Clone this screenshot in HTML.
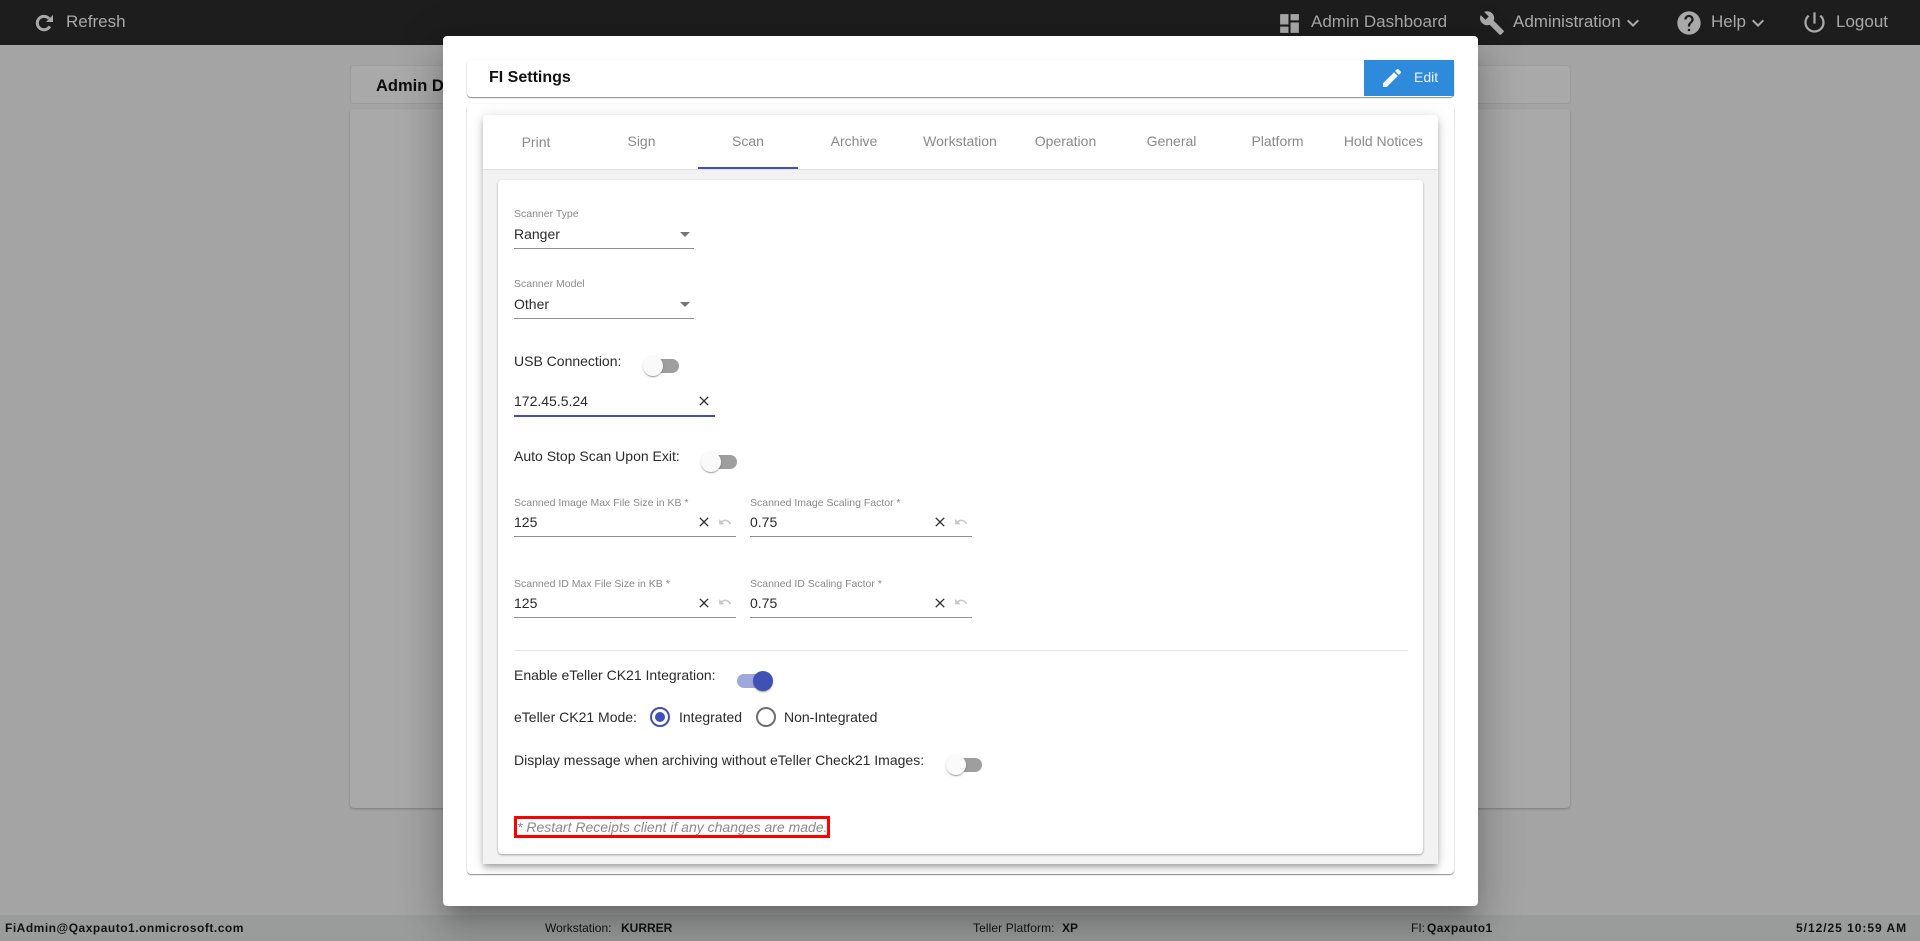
<!DOCTYPE html>
<html lang="en">
<head>
<meta charset="utf-8">
<title>FI Settings</title>
<style>
html,body{margin:0;padding:0;width:1920px;height:941px;overflow:hidden;background:#a4a4a4;font-family:"Liberation Sans",Arial,sans-serif;}
.a{position:absolute;white-space:nowrap;}
.t{position:absolute;white-space:nowrap;line-height:20px;height:20px;font-size:14px;color:#2b2b2b;}
.l{position:absolute;white-space:nowrap;line-height:14px;height:14px;font-size:10.5px;color:#8a8a8a;}
.tab{position:absolute;white-space:nowrap;line-height:20px;height:20px;font-size:14px;color:#8a8a8a;width:106px;text-align:center;}
.n{position:absolute;white-space:nowrap;line-height:24px;height:24px;font-size:17px;color:#a9a9a9;top:10px;}
.u{position:absolute;height:1px;background:#8f8f8f;}
svg{position:absolute;display:block;}
.f{position:absolute;top:920px;line-height:16px;font-size:12px;color:#111;white-space:nowrap;}
.f b{font-weight:700;}
.track{position:absolute;width:34px;height:14px;border-radius:7px;background:#9e9e9e;}
.knob{position:absolute;width:20px;height:20px;border-radius:50%;background:#fafafa;box-shadow:0 2px 1px -1px rgba(0,0,0,.2),0 1px 1px 0 rgba(0,0,0,.14),0 1px 3px 0 rgba(0,0,0,.12);}
</style>
</head>
<body>

<!-- background page -->
<div class="a" style="left:350px;top:65px;width:1219px;height:37px;background:#a9a9a9;border:1px solid #9b9b9b;border-radius:4px;"></div>
<div class="a" style="left:376px;top:76px;font-size:16.5px;font-weight:700;color:#0c0c0c;line-height:20px;">Admin Dashboard</div>
<div class="a" style="left:350px;top:109px;width:1220px;height:699px;background:#a9a9a9;border-radius:4px;box-shadow:0 1px 2px rgba(0,0,0,.25);"></div>

<!-- footer -->
<div class="a" style="left:0;top:915px;width:1920px;height:26px;background:#9a9b9b;"></div>
<div class="f" style="left:5px;letter-spacing:.5px;"><b>FiAdmin@Qaxpauto1.onmicrosoft.com</b></div>
<div class="f" style="left:545px;">Workstation:</div>
<div class="f" style="left:621px;"><b>KURRER</b></div>
<div class="f" style="left:973px;letter-spacing:.1px;">Teller Platform:</div>
<div class="f" style="left:1062px;"><b>XP</b></div>
<div class="f" style="left:1411px;">FI:</div>
<div class="f" style="left:1427px;letter-spacing:.4px;"><b>Qaxpauto1</b></div>
<div class="f" style="left:1796px;letter-spacing:.97px;"><b>5/12/25 10:59 AM</b></div>

<!-- header -->
<div class="a" style="left:0;top:0;width:1920px;height:45px;background:#1d1d1d;"></div>
<svg style="left:30px;top:10px" width="28" height="28" viewBox="30 10 28 28"><path d="M49.1 18.7A6.7 6.7 0 1 0 49.8 26.4" fill="none" stroke="#a9a9a9" stroke-width="3"/><path d="M53 15v7h-7z" fill="#a9a9a9"/></svg>
<div class="n" style="left:66px;">Refresh</div>

<svg style="left:1277px;top:11px" width="25" height="25" viewBox="0 0 24 24" fill="#a9a9a9"><path d="M3 13h8V3H3v10zm0 8h8v-6H3v6zm10 0h8V11h-8v10zm0-18v6h8V3h-8z"/></svg>
<div class="n" style="left:1311px;">Admin Dashboard</div>
<svg style="left:1478.5px;top:10px" width="26" height="26" viewBox="0 0 24 24" fill="#a9a9a9"><path d="M22.7 19l-9.1-9.1c.9-2.3.4-5-1.5-6.9-2-2-5-2.4-7.4-1.3L9 6 6 9 1.6 4.7C.4 7.1.9 10.1 2.9 12.1c1.9 1.9 4.6 2.4 6.9 1.5l9.1 9.1c.4.4 1 .4 1.4 0l2.3-2.3c.5-.4.5-1.1.1-1.4z"/></svg>
<div class="n" style="left:1513px;">Administration</div>
<svg style="left:1621px;top:10.5px" width="24" height="24" viewBox="0 0 24 24" fill="#a9a9a9"><path d="M7.41 8.59L12 13.17l4.59-4.58L18 10l-6 6-6-6 1.41-1.41z"/></svg>
<svg style="left:1675px;top:9px" width="28" height="28" viewBox="0 0 24 24" fill="#a9a9a9"><path d="M12 2C6.48 2 2 6.48 2 12s4.48 10 10 10 10-4.48 10-10S17.52 2 12 2zm1 17h-2v-2h2v2zm2.07-7.75l-.9.92C13.45 12.9 13 13.5 13 15h-2v-.5c0-1.1.45-2.1 1.17-2.83l1.24-1.26c.37-.36.59-.86.59-1.41 0-1.1-.9-2-2-2s-2 .9-2 2H8c0-2.21 1.79-4 4-4s4 1.79 4 4c0 .88-.36 1.68-.93 2.25z"/></svg>
<div class="n" style="left:1711px;">Help</div>
<svg style="left:1746px;top:10.5px" width="24" height="24" viewBox="0 0 24 24" fill="#a9a9a9"><path d="M7.41 8.59L12 13.17l4.59-4.58L18 10l-6 6-6-6 1.41-1.41z"/></svg>
<svg style="left:1801px;top:9px" width="27" height="27" viewBox="0 0 24 24" fill="#a9a9a9"><path d="M13 3h-2v10h2V3zm4.83 2.17l-1.42 1.42C17.99 7.86 19 9.81 19 12c0 3.87-3.13 7-7 7s-7-3.13-7-7c0-2.19 1.01-4.14 2.58-5.42L6.17 5.17C4.23 6.82 3 9.26 3 12c0 4.97 4.03 9 9 9s9-4.03 9-9c0-2.74-1.23-5.18-3.17-6.83z"/></svg>
<div class="n" style="left:1836px;">Logout</div>

<!-- modal -->
<div class="a" style="left:443px;top:36px;width:1035px;height:870px;background:#fff;border-radius:4px;box-shadow:0 11px 15px -7px rgba(0,0,0,.2),0 24px 38px 3px rgba(0,0,0,.14),0 9px 46px 8px rgba(0,0,0,.12);"></div>

<!-- title card -->
<div class="a" style="left:467px;top:60px;width:987px;height:37px;background:#fff;border-radius:4px;box-shadow:0 1px 1px rgba(0,0,0,.45),0 0 2px rgba(0,0,0,.06);"></div>
<div class="a" style="left:489px;top:68px;font-size:16px;font-weight:700;line-height:20px;color:#111;">FI Settings</div>
<div class="a" style="left:1364px;top:60px;width:90px;height:36px;background:#2e8bdc;"></div>
<svg style="left:1380px;top:66px" width="24" height="24" viewBox="0 0 24 24" fill="#f4f9fd"><path d="M3 17.25V21h3.75L17.81 9.94l-3.75-3.75L3 17.25zM20.71 7.04c.39-.39.39-1.02 0-1.41l-2.34-2.34c-.39-.39-1.02-.39-1.41 0l-1.83 1.83 3.75 3.75 1.83-1.83z"/></svg>
<div class="a" style="left:1414px;top:67px;font-size:14px;line-height:20px;color:#eaf3fb;">Edit</div>

<!-- outer card -->
<div class="a" style="left:467px;top:104px;width:987px;height:770px;background:#fff;border-radius:4px;box-shadow:0 1px 1px rgba(0,0,0,.45),0 0 2px rgba(0,0,0,.06);"></div>

<!-- tab panel -->
<div class="a" style="left:483px;top:115px;width:955px;height:749px;background:#f2f2f2;border-radius:4px 4px 0 0;box-shadow:0 3px 5px -1px rgba(0,0,0,.2),0 5px 8px 0 rgba(0,0,0,.14),0 1px 14px 0 rgba(0,0,0,.12);"></div>
<div class="a" style="left:483px;top:115px;width:955px;height:54px;background:#fff;border-radius:4px 4px 0 0;border-bottom:1px solid #e0e0e0;"></div>
<div class="tab" style="left:483px;top:132px;">Print</div>
<div class="tab" style="left:588.5px;top:131px;">Sign</div>
<div class="tab" style="left:695px;top:131px;">Scan</div>
<div class="tab" style="left:801px;top:131px;">Archive</div>
<div class="tab" style="left:907px;top:131px;">Workstation</div>
<div class="tab" style="left:1012.5px;top:131px;">Operation</div>
<div class="tab" style="left:1118.5px;top:131px;">General</div>
<div class="tab" style="left:1224.5px;top:131px;">Platform</div>
<div class="tab" style="left:1330.5px;top:131px;">Hold Notices</div>
<div class="a" style="left:698px;top:167px;width:100px;height:2px;background:#3f51b5;"></div>

<!-- inner card -->
<div class="a" style="left:498px;top:180px;width:925px;height:674px;background:#fff;border-radius:4px;box-shadow:0 1px 2px rgba(0,0,0,.35);"></div>

<!-- selects -->
<div class="l" style="left:514px;top:207px;">Scanner Type</div>
<div class="t" style="left:514px;top:224px;">Ranger</div>
<div class="a" style="left:680px;top:232px;width:0;height:0;border-left:5px solid transparent;border-right:5px solid transparent;border-top:5px solid #757575;"></div>
<div class="u" style="left:514px;top:248px;width:180px;"></div>

<div class="l" style="left:514px;top:277px;">Scanner Model</div>
<div class="t" style="left:514px;top:294px;">Other</div>
<div class="a" style="left:680px;top:302px;width:0;height:0;border-left:5px solid transparent;border-right:5px solid transparent;border-top:5px solid #757575;"></div>
<div class="u" style="left:514px;top:318px;width:180px;"></div>

<!-- USB -->
<div class="t" style="left:514px;top:351px;">USB Connection:</div>
<div class="track" style="left:645px;top:359px;"></div>
<div class="knob" style="left:643px;top:356px;"></div>
<div class="t" style="left:514px;top:391px;">172.45.5.24</div>
<svg style="left:696px;top:393px" width="16" height="16" viewBox="0 0 24 24" fill="#333"><path d="M19 6.41L17.59 5 12 10.59 6.41 5 5 6.41 10.59 12 5 17.59 6.41 19 12 13.41 17.59 19 19 17.59 13.41 12z"/></svg>
<div class="a" style="left:514px;top:415px;width:201px;height:2px;background:#3f51b5;"></div>

<!-- Auto stop -->
<div class="t" style="left:514px;top:446px;">Auto Stop Scan Upon Exit:</div>
<div class="track" style="left:703px;top:455px;"></div>
<div class="knob" style="left:701px;top:452px;"></div>

<!-- row 1 -->
<div class="l" style="left:514px;top:496px;">Scanned Image Max File Size in KB *</div>
<div class="t" style="left:514px;top:512px;">125</div>
<svg style="left:696px;top:514px" width="16" height="16" viewBox="0 0 24 24" fill="#333"><path d="M19 6.41L17.59 5 12 10.59 6.41 5 5 6.41 10.59 12 5 17.59 6.41 19 12 13.41 17.59 19 19 17.59 13.41 12z"/></svg>
<svg style="left:718px;top:515px" width="14" height="14" viewBox="0 0 24 24" fill="#c6c6c6"><path d="M12.5 8c-2.65 0-5.05.99-6.9 2.6L2 7v9h9l-3.62-3.62c1.39-1.16 3.16-1.88 5.12-1.88 3.54 0 6.55 2.31 7.6 5.5l2.37-.78C21.08 11.03 17.15 8 12.5 8z"/></svg>
<div class="u" style="left:514px;top:536px;width:222px;"></div>

<div class="l" style="left:750px;top:496px;">Scanned Image Scaling Factor *</div>
<div class="t" style="left:750px;top:512px;">0.75</div>
<svg style="left:932px;top:514px" width="16" height="16" viewBox="0 0 24 24" fill="#333"><path d="M19 6.41L17.59 5 12 10.59 6.41 5 5 6.41 10.59 12 5 17.59 6.41 19 12 13.41 17.59 19 19 17.59 13.41 12z"/></svg>
<svg style="left:954px;top:515px" width="14" height="14" viewBox="0 0 24 24" fill="#c6c6c6"><path d="M12.5 8c-2.65 0-5.05.99-6.9 2.6L2 7v9h9l-3.62-3.62c1.39-1.16 3.16-1.88 5.12-1.88 3.54 0 6.55 2.31 7.6 5.5l2.37-.78C21.08 11.03 17.15 8 12.5 8z"/></svg>
<div class="u" style="left:750px;top:536px;width:222px;"></div>

<!-- row 2 -->
<div class="l" style="left:514px;top:577px;">Scanned ID Max File Size in KB *</div>
<div class="t" style="left:514px;top:593px;">125</div>
<svg style="left:696px;top:595px" width="16" height="16" viewBox="0 0 24 24" fill="#333"><path d="M19 6.41L17.59 5 12 10.59 6.41 5 5 6.41 10.59 12 5 17.59 6.41 19 12 13.41 17.59 19 19 17.59 13.41 12z"/></svg>
<svg style="left:718px;top:595px" width="14" height="14" viewBox="0 0 24 24" fill="#c6c6c6"><path d="M12.5 8c-2.65 0-5.05.99-6.9 2.6L2 7v9h9l-3.62-3.62c1.39-1.16 3.16-1.88 5.12-1.88 3.54 0 6.55 2.31 7.6 5.5l2.37-.78C21.08 11.03 17.15 8 12.5 8z"/></svg>
<div class="u" style="left:514px;top:617px;width:222px;"></div>

<div class="l" style="left:750px;top:577px;">Scanned ID Scaling Factor *</div>
<div class="t" style="left:750px;top:593px;">0.75</div>
<svg style="left:932px;top:595px" width="16" height="16" viewBox="0 0 24 24" fill="#333"><path d="M19 6.41L17.59 5 12 10.59 6.41 5 5 6.41 10.59 12 5 17.59 6.41 19 12 13.41 17.59 19 19 17.59 13.41 12z"/></svg>
<svg style="left:954px;top:595px" width="14" height="14" viewBox="0 0 24 24" fill="#c6c6c6"><path d="M12.5 8c-2.65 0-5.05.99-6.9 2.6L2 7v9h9l-3.62-3.62c1.39-1.16 3.16-1.88 5.12-1.88 3.54 0 6.55 2.31 7.6 5.5l2.37-.78C21.08 11.03 17.15 8 12.5 8z"/></svg>
<div class="u" style="left:750px;top:617px;width:222px;"></div>

<!-- divider -->
<div class="a" style="left:514px;top:650px;width:894px;height:1px;background:#e3e3e3;"></div>

<!-- eTeller -->
<div class="t" style="left:514px;top:665px;">Enable eTeller CK21 Integration:</div>
<div class="track" style="left:737px;top:674px;background:#9fa8da;"></div>
<div class="knob" style="left:753px;top:671px;background:#3f51b5;"></div>

<div class="t" style="left:514px;top:707px;">eTeller CK21 Mode:</div>
<div class="a" style="left:650px;top:707px;width:16px;height:16px;border:2px solid #3f51b5;border-radius:50%;"></div>
<div class="a" style="left:655px;top:712px;width:10px;height:10px;background:#3f51b5;border-radius:50%;"></div>
<div class="t" style="left:679px;top:707px;">Integrated</div>
<div class="a" style="left:756px;top:707px;width:16px;height:16px;border:2px solid #6e6e6e;border-radius:50%;"></div>
<div class="t" style="left:784px;top:707px;">Non-Integrated</div>

<div class="t" style="left:514px;top:750px;">Display message when archiving without eTeller Check21 Images:</div>
<div class="track" style="left:948px;top:758px;"></div>
<div class="knob" style="left:946px;top:755px;"></div>

<!-- note -->
<div class="a" style="left:514px;top:816px;width:310px;height:16px;border:3px solid #ff0000;"></div>
<div class="t" style="left:517px;top:817px;font-style:italic;color:#8a8a8a;">* Restart Receipts client if any changes are made.</div>

</body>
</html>
